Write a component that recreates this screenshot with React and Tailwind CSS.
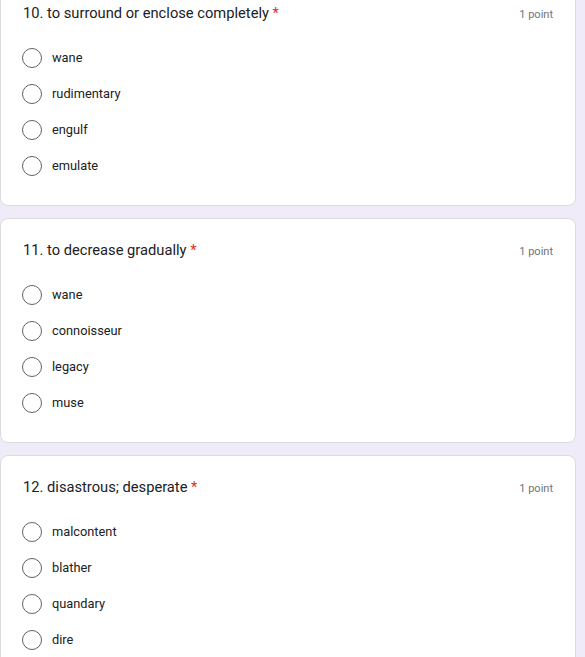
const QUESTIONS = [
  { num: 10, title: 'to surround or enclose completely', options: ['wane', 'rudimentary', 'engulf', 'emulate'] },
  { num: 11, title: 'to decrease gradually', options: ['wane', 'connoisseur', 'legacy', 'muse'] },
  { num: 12, title: 'disastrous; desperate', options: ['malcontent', 'blather', 'quandary', 'dire'] },
]

function Question({ q }) {
  return (
    <div className="w-[576px] h-[225px] shrink-0 bg-white border border-[#dadce0] rounded-lg pl-[21px] pr-[22px] pt-[21px]">
      <div className="flex items-start justify-between h-5 pl-px">
        <div className="text-[14.7px] leading-5 text-[#202124]">
          {q.num}. {q.title} <span className="text-[#d93025]">*</span>
        </div>
        <div className="text-[11px] leading-5 pt-[2px] text-[#70757a]">1 point</div>
      </div>
      <div className="mt-[17px] flex flex-col">
        {q.options.map((o) => (
          <label key={o} className="h-9 flex items-center gap-[10px]">
            <span className="w-5 h-5 rounded-full border-[1.5px] border-[#5f6368] shrink-0" />
            <span className="text-[12.8px] text-[#202124]">{o}</span>
          </label>
        ))}
      </div>
    </div>
  )
}

export default function App() {
  return (
    <div className="h-[657px] overflow-hidden bg-[#f0ebf8]" style={{ fontFamily: 'Roboto, "Liberation Sans", sans-serif' }}>
      <div className="flex flex-col gap-3 -mt-[19px]">
        {QUESTIONS.map((q) => (
          <Question key={q.num} q={q} />
        ))}
      </div>
    </div>
  )
}
